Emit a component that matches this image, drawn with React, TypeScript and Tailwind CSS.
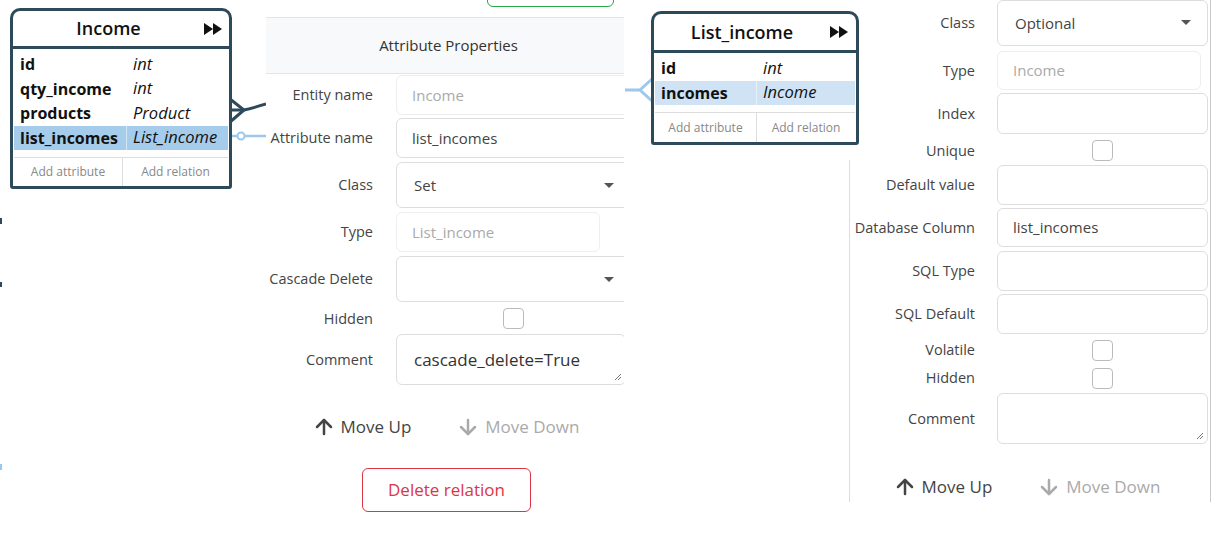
import { ArrowUp, ArrowDown } from "lucide-react";
import type { ReactNode } from "react";

type Attr = { name: string; type: string; hl?: "strong" | "light" };

function Forward() {
  return (
    <svg width="18" height="12" viewBox="0 0 18 12" className="shrink-0">
      <polygon points="0,0 9,6 0,12" fill="#111" />
      <polygon points="9,0 18,6 9,12" fill="#111" />
    </svg>
  );
}

function EntityCard({
  title,
  rows,
  nameCol,
  footCol,
  headerH,
  footerH,
  iconPad,
}: {
  title: string;
  rows: Attr[];
  nameCol: string;
  footCol: string;
  headerH: string;
  footerH: string;
  iconPad: string;
}) {
  return (
    <div className="rounded-t-[10px] rounded-b-[3px] border-[3px] border-[#2d4a5b] bg-white">
      {/* Header */}
      <div className={`flex items-center border-b-[3px] border-[#2d4a5b] ${headerH}`}>
        <div className="flex-1 text-center text-[18px] font-semibold text-[#111]">{title}</div>
        <div className={iconPad}>
          <Forward />
        </div>
      </div>

      {/* Attributes */}
      <div className="px-px pt-[3px] pb-[7px]">
        {rows.map((r) => (
          <div
            key={r.name}
            className={`flex h-[24.5px] items-center text-[16px] text-[#111] ${
              r.hl === "strong" ? "bg-[#a6ccec]" : r.hl === "light" ? "bg-[#cfe3f5]" : ""
            }`}
          >
            <div
              className={`flex h-full items-center pl-[6px] font-bold ${nameCol} ${
                r.hl ? "border-r border-white/50" : ""
              }`}
            >
              {r.name}
            </div>
            <div className="pl-[6px] text-[16.5px] italic">{r.type}</div>
          </div>
        ))}
      </div>

      {/* Footer */}
      <div className={`mx-px flex border-t border-[#ddd] text-[12px] text-[#888] ${footerH}`}>
        <div className={`flex items-center justify-center border-r border-[#ddd] ${footCol}`}>
          Add attribute
        </div>
        <div className="flex flex-1 items-center justify-center">Add relation</div>
      </div>
    </div>
  );
}

function Field({ value, muted, w }: { value: string; muted?: boolean; w: string }) {
  return (
    <div
      className={`flex h-full items-center rounded-[6px] border pl-[15px] text-[15px] ${w} ${
        muted ? "border-[#eee] text-[#aaa]" : "border-[#ddd] text-[#444]"
      }`}
    >
      {value}
    </div>
  );
}

function Select({ value, w }: { value: string; w: string }) {
  return (
    <div
      className={`flex h-full items-center justify-between rounded-[6px] border border-[#ddd] pl-[17px] pr-[16px] text-[15px] text-[#444] ${w}`}
    >
      <span>{value}</span>
      <svg width="10" height="5" viewBox="0 0 10 5">
        <polygon points="0,0 10,0 5,5" fill="#555" />
      </svg>
    </div>
  );
}

function TextArea({ value, w }: { value: string; w: string }) {
  return (
    <div
      className={`relative flex h-full items-center rounded-[6px] border border-[#ddd] pl-[17px] text-[17px] text-[#333] ${w}`}
    >
      {value}
      <svg width="8" height="8" viewBox="0 0 8 8" className="absolute right-[3px] bottom-[3px]">
        <line x1="1" y1="7" x2="7" y2="1" stroke="#777" strokeWidth="1" />
        <line x1="4" y1="7" x2="7" y2="4" stroke="#777" strokeWidth="1" />
      </svg>
    </div>
  );
}

function Check({ w }: { w: string }) {
  return (
    <div className={`flex h-full justify-center ${w}`}>
      <div className="h-[21px] w-[21px] rounded-[4px] border border-[#bbb] bg-white" />
    </div>
  );
}

function Row({
  label,
  cls,
  labelW,
  gap,
  children,
}: {
  label: string;
  cls: string;
  labelW: string;
  gap: string;
  children: ReactNode;
}) {
  return (
    <div className={`flex items-center ${cls} ${gap}`}>
      <div className={`shrink-0 text-right text-[14.5px] text-[#444] ${labelW}`}>{label}</div>
      <div className="h-full">{children}</div>
    </div>
  );
}

function MoveButtons({ cls }: { cls: string }) {
  return (
    <div className={`flex items-center justify-center gap-[45px] pr-[6px] text-[17px] ${cls}`}>
      <div className="flex items-center gap-[5px] text-[#444]">
        <ArrowUp size={24} strokeWidth={2.5} />
        <span>Move Up</span>
      </div>
      <div className="flex items-center gap-[5px] text-[#aaa]">
        <ArrowDown size={24} strokeWidth={2.5} />
        <span>Move Down</span>
      </div>
    </div>
  );
}

export default function App() {
  const midL = "w-[107px]";
  const midGap = "gap-[23px]";
  const rL = "w-[126px]";
  const rGap = "gap-[22px]";

  return (
    <div className="flex h-[536px] w-[1214px] overflow-hidden bg-white font-['Open_Sans',sans-serif]">
      {/* Diagram: Income */}
      <div className="relative h-full w-[266px] shrink-0">
        <div className="absolute top-[218px] left-0 h-[6px] w-[2px] bg-[#2d4a5b]" />
        <div className="absolute top-[282px] left-0 h-[5px] w-[2px] bg-[#2d4a5b]" />
        <div className="absolute top-[464px] left-0 h-[6px] w-[2px] bg-[#9cc8ec]" />
        <svg className="absolute inset-0" width="266" height="536">
          <path d="M230 99 L244 110 L230 122" stroke="#2d4a5b" strokeWidth="3" fill="none" />
          <path d="M230 110 L244 110 Q253 108 266 104" stroke="#2d4a5b" strokeWidth="3" fill="none" />
          <line x1="231" y1="136" x2="266" y2="136" stroke="#9cc8ec" strokeWidth="2.5" />
          <circle cx="241" cy="136" r="3.5" fill="white" stroke="#9cc8ec" strokeWidth="2" />
        </svg>
        <div className="absolute top-[8px] left-[10px] w-[222px]">
          <EntityCard
            title="Income"
            nameCol="w-[113px]"
            footCol="w-[109px]"
            headerH="h-[38px]"
            footerH="h-[29px]"
            iconPad="mr-[7px]"
            rows={[
              { name: "id", type: "int" },
              { name: "qty_income", type: "int" },
              { name: "products", type: "Product" },
              { name: "list_incomes", type: "List_income", hl: "strong" },
            ]}
          />
        </div>
      </div>

      {/* Attribute Properties (relation) */}
      <div className="h-full w-[358px] shrink-0 overflow-hidden">
        <div className="flex w-[365px] flex-col">
          <div className="mt-[-31px] ml-[221px] h-[38px] w-[127px] rounded-md border border-[#28a745]" />
          <div className="mt-[10px] flex h-[57px] items-center justify-center border-y border-[#e3e5e8] bg-[#f8f9fa] text-[15px] font-medium text-[#333]">
            Attribute Properties
          </div>
          <Row label="Entity name" cls="mt-[1px] h-[40px]" labelW={midL} gap={midGap}>
            <Field value="Income" muted w="w-[235px]" />
          </Row>
          <Row label="Attribute name" cls="mt-[3px] h-[40px]" labelW={midL} gap={midGap}>
            <Field value="list_incomes" w="w-[235px]" />
          </Row>
          <Row label="Class" cls="mt-[4px] h-[46px]" labelW={midL} gap={midGap}>
            <Select value="Set" w="w-[235px]" />
          </Row>
          <Row label="Type" cls="mt-[4px] h-[40px]" labelW={midL} gap={midGap}>
            <Field value="List_income" muted w="w-[204px]" />
          </Row>
          <Row label="Cascade Delete" cls="mt-[4px] h-[46px]" labelW={midL} gap={midGap}>
            <Select value="" w="w-[235px]" />
          </Row>
          <Row label="Hidden" cls="mt-[6px] h-[21px]" labelW={midL} gap={midGap}>
            <Check w="w-[235px]" />
          </Row>
          <Row label="Comment" cls="mt-[5px] h-[51px]" labelW={midL} gap={midGap}>
            <TextArea value="cascade_delete=True" w="w-[230px]" />
          </Row>
          <MoveButtons cls="mt-[27px] h-[30px]" />
          <div className="mt-[26px] flex justify-center pr-[4px]">
            <div className="flex h-[44px] w-[169px] items-center justify-center rounded-[6px] border border-[#dc3545] text-[17px] text-[#dc3545]">
              Delete relation
            </div>
          </div>
        </div>
      </div>

      {/* Diagram: List_income */}
      <div className="relative z-10 h-full w-[225px] shrink-0">
        <svg className="absolute inset-0" width="40" height="140">
          <path d="M1 90 L16 90 M28 79 L16 90 L28 101" stroke="#9cc8ec" strokeWidth="3" fill="none" />
        </svg>
        <div className="absolute top-[11px] left-[27px] w-[208px]">
          <EntityCard
            title="List_income"
            nameCol="w-[102px]"
            footCol="w-[102px]"
            headerH="h-[39px]"
            footerH="h-[30px]"
            iconPad="mr-[8px]"
            rows={[
              { name: "id", type: "int" },
              { name: "incomes", type: "Income", hl: "light" },
            ]}
          />
        </div>
      </div>

      {/* Attribute Properties (column) */}
      <div className="relative flex h-[502px] w-[362px] shrink-0 flex-col border-r border-[#c9c9c9]">
        <div className="absolute top-[160px] left-0 h-[342px] w-px bg-[#ddd]" />
        <Row label="Class" cls="h-[46px]" labelW={rL} gap={rGap}>
          <Select value="Optional" w="w-[211px]" />
        </Row>
        <Row label="Type" cls="mt-[5px] h-[40px]" labelW={rL} gap={rGap}>
          <Field value="Income" muted w="w-[204px]" />
        </Row>
        <Row label="Index" cls="mt-[3px] h-[41px]" labelW={rL} gap={rGap}>
          <Field value="" w="w-[211px]" />
        </Row>
        <Row label="Unique" cls="mt-[6px] h-[21px]" labelW={rL} gap={rGap}>
          <Check w="w-[211px]" />
        </Row>
        <Row label="Default value" cls="mt-[4px] h-[40px]" labelW={rL} gap={rGap}>
          <Field value="" w="w-[211px]" />
        </Row>
        <Row label="Database Column" cls="mt-[3px] h-[40px]" labelW={rL} gap={rGap}>
          <Field value="list_incomes" w="w-[211px]" />
        </Row>
        <Row label="SQL Type" cls="mt-[4px] h-[40px]" labelW={rL} gap={rGap}>
          <Field value="" w="w-[211px]" />
        </Row>
        <Row label="SQL Default" cls="mt-[3px] h-[40px]" labelW={rL} gap={rGap}>
          <Field value="" w="w-[211px]" />
        </Row>
        <Row label="Volatile" cls="mt-[6px] h-[21px]" labelW={rL} gap={rGap}>
          <Check w="w-[211px]" />
        </Row>
        <Row label="Hidden" cls="mt-[7px] h-[21px]" labelW={rL} gap={rGap}>
          <Check w="w-[211px]" />
        </Row>
        <Row label="Comment" cls="mt-[4px] h-[52px]" labelW={rL} gap={rGap}>
          <TextArea value="" w="w-[211px]" />
        </Row>
        <MoveButtons cls="mt-[28px] h-[30px]" />
      </div>
    </div>
  );
}
